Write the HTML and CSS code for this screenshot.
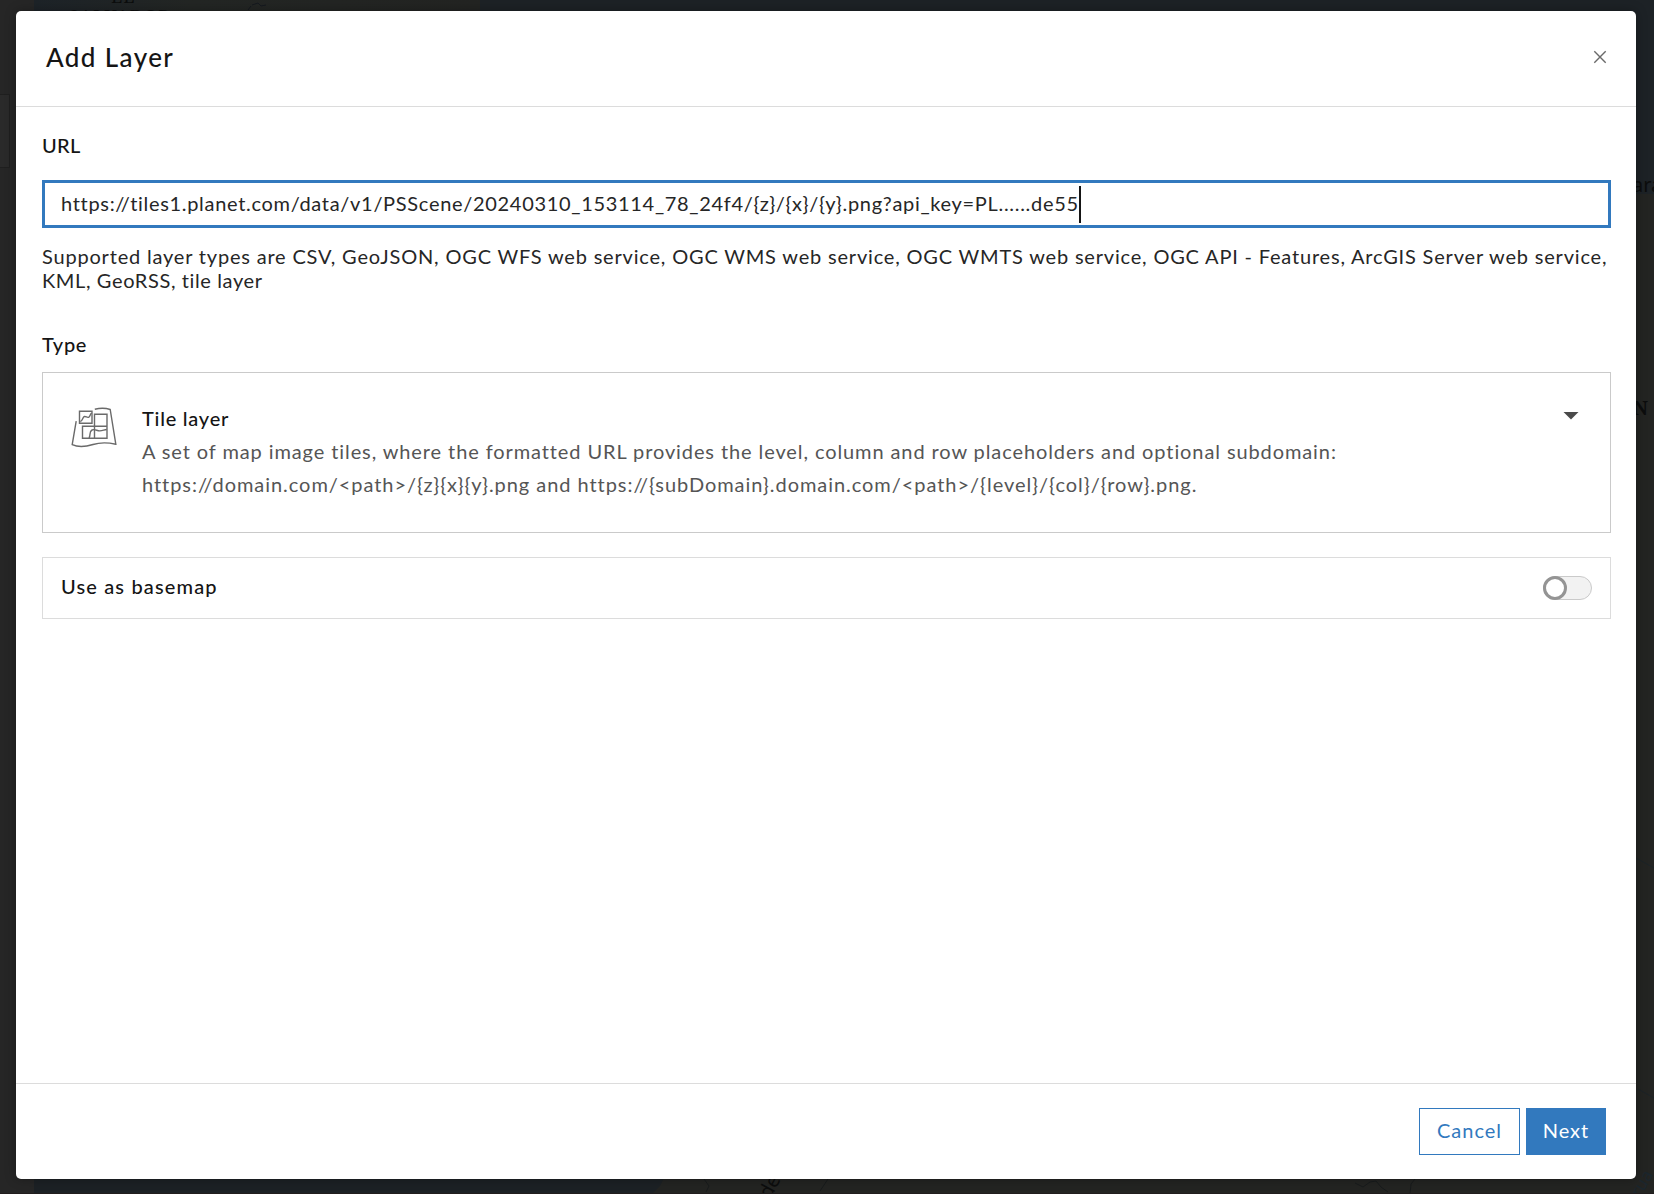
FILE: index.html
```html
<!DOCTYPE html>
<html lang="en">
<head>
  <meta charset="UTF-8" />
  <meta name="viewport" content="width=device-width, initial-scale=1.0" />
  <title>Add Layer</title>
  <link rel="stylesheet" href="styles.css">
</head>
<body>
  <svg class="map" viewBox="0 0 1654 1194" aria-hidden="true">
    <defs>
      <linearGradient id="land" x1="0" y1="0" x2="1" y2="0">
        <stop offset="0" stop-color="#1d2328"/>
        <stop offset="0.35" stop-color="#232624"/>
        <stop offset="1" stop-color="#232422"/>
      </linearGradient>
    </defs>
    <rect width="1654" height="1194" fill="#232422"/>
    <rect x="34" width="446" height="20" fill="url(#land)"/>
    <path d="M480 0H1654V194H480z" fill="#1d2226"/>
    <path d="M34 1170H668L660 1186L652 1194H34z" fill="#1c2125"/>
    <rect width="34" height="1194" fill="#262626"/>
    <path d="M-1 94.500H9.500V167.500H-1z" fill="#2a2a2a" stroke="#1f1f1f"/>
    <g fill="#0c0d0d">
      <text class="place" x="111" y="3" font-size="18" letter-spacing="1">EL</text>
      <text class="place" x="69" y="23" font-size="18" letter-spacing="1">SALVADOR</text>
      <text class="place" x="1633" y="415" font-size="19" font-weight="bold">N</text>
      <text class="town" x="1632" y="192" font-size="20">ara</text>
      <text class="town" x="0" y="0" font-size="20" transform="translate(770 1200) rotate(-62)">de</text>
    </g>
    <text class="town" font-size="17" fill="#1b262d" transform="translate(1640 1198) rotate(-60)">rua</text>
    <g fill="none" stroke="#181b1c">
      <path d="M1355 1183l8 4 7-5 6-1 5 6 7 5M1410 1194l1-10 4-5M704 1179l5 7-3 6M828 1179l-8 12"/>
      <path d="M252 5l6-2 3 3 5-1M248 10l3-4" stroke="#15191f"/>
      <path d="M1636 858l18 10M1638 1089l16 9" stroke="#1c2328"/>
    </g>
    <path d="M0 1193.500H1654" stroke="#211d1d"/>
  </svg>

  <div class="modal" role="dialog" aria-label="Add Layer">
    <div class="modal-header">
      <h1>Add Layer</h1>
      <button class="close" type="button" aria-label="Close">
        <svg width="14" height="14" viewBox="0 0 14 14"><path d="M1.300 1.300L12.700 12.700M12.700 1.300L1.300 12.700" fill="none" stroke="#6a6a6a" stroke-width="1.400"/></svg>
      </button>
    </div>

    <div class="modal-body">
      <div class="label url-label">URL</div>
      <div class="url-input"><span class="url-text">https://tiles1.planet.com/data/v1/PSScene/20240310_153114_78_24f4/{z}/{x}/{y}.png?api_key=PL......de55</span><span class="caret"></span></div>
      <p class="help"><span class="help-first">Supported layer types are CSV, GeoJSON, OGC WFS web service, OGC WMS web service, OGC WMTS web service, OGC API - Features, ArcGIS Server web service,</span><br><span class="help-second">KML, GeoRSS, tile layer</span></p>

      <div class="label type-label">Type</div>
      <div class="type-select">
        <svg class="type-icon" width="48" height="44" viewBox="0 0 48 44" fill="none" stroke="#6a6a6a" stroke-width="1.400">
          <path d="M6.200 15.200L2.200 38.700C8 41.300 15 41 23 38.500C31 36 38 36.500 45.800 38.200L40.200 3.500C35 1.800 30 2 24.800 3.200"/>
          <path d="M9.500 5.200H22V17.300H9.500zM24.500 8.200H37V20.200H24.500zM12.500 20.200H24.500V32.300H12.500zM24.500 20.200H37V32.300H24.500z"/>
          <path d="M10.300 15.500c2.500-.3 2.200-4.800 4.200-5 1.800-.2 2.300 1.300 4 .8 1.800-.6 1.200-3 3.200-4.300M19 32c2-3-.2-6.500 3-8 3-1.300 5 1 7.800.9 3-.1 4.500-1.300 7-1.400"/>
        </svg>
        <div class="type-text">
          <div class="type-name">Tile layer</div>
          <div class="type-desc"><span class="desc-first">A set of map image tiles, where the formatted URL provides the level, column and row placeholders and optional subdomain:</span><br><span class="desc-second">https://domain.com/&lt;path&gt;/{z}{x}{y}.png and https://{subDomain}.domain.com/&lt;path&gt;/{level}/{col}/{row}.png.</span></div>
        </div>
        <svg class="arrow" width="16" height="8" viewBox="0 0 16 8"><path d="M.5 0H15.500L8 7.600z" fill="#4a4a4a"/></svg>
      </div>

      <div class="basemap">
        <span class="basemap-name">Use as basemap</span>
        <span class="switch"><span class="handle"></span></span>
      </div>
    </div>

    <div class="modal-footer">
      <button class="btn cancel" type="button">Cancel</button>
      <button class="btn next" type="button">Next</button>
    </div>
  </div>
</body>
</html>
```
FILE: styles.css
```css
* {
  box-sizing: border-box;
}
body {
  margin: 0;
  height: 1194px;
  padding: 11px 18px 15px 16px;
  overflow: hidden;
  background: #232422;
  color: #151515;
  font-family: "Avenir Next", Lato, "Open Sans", sans-serif;
  font-size: 20px;
}
.map {
  position: absolute;
  top: 0;
  left: 0;
  width: 1654px;
  height: 1194px;
}
.place {
  font-family: "Noto Serif", "DejaVu Serif", serif;
}
.town {
  font-family: "Noto Sans", sans-serif;
}
.modal {
  position: relative;
  display: flex;
  flex-direction: column;
  height: 1168px;
  background: #fff;
  border-radius: 5px;
  box-shadow: 0 0 12px rgba(0, 0, 0, 0.3);
}
.modal-header {
  display: flex;
  justify-content: space-between;
  align-items: center;
  height: 96px;
  padding: 0 29px 4px 30px;
  border-bottom: 1px solid #dcdcdc;
}
h1 {
  margin: 0;
  font-size: 26px;
  font-weight: 500;
  line-height: 36px;
  letter-spacing: 1.4px;
}
.close {
  display: flex;
  padding: 0;
  border: none;
  background: none;
}
.modal-body {
  flex: 1;
  padding: 26px 25px 0 26px;
}
.label {
  height: 24px;
  font-weight: 500;
  line-height: 24px;
}
.url-label {
  letter-spacing: 0.3px;
}
.url-input {
  display: flex;
  align-items: center;
  height: 48px;
  margin-top: 23px;
  padding: 0 16px;
  border: 3px solid #3279be;
  color: #262626;
  white-space: nowrap;
}
.url-text {
  padding-bottom: 2px;
  letter-spacing: 0.69px;
}
.caret {
  width: 2px;
  height: 37px;
  background: #151515;
}
.help {
  height: 48px;
  margin: 16px 0 0;
  color: #262626;
  line-height: 24px;
  white-space: nowrap;
}
.help-first {
  letter-spacing: 0.81px;
}
.help-second {
  letter-spacing: 0.62px;
}
.type-label {
  margin-top: 40px;
  letter-spacing: 0.7px;
}
.type-select {
  display: flex;
  height: 161px;
  margin-top: 16px;
  padding: 29px 31px 0 27px;
  border: 1px solid #cacaca;
}
.type-icon {
  flex: none;
  margin-top: 4px;
}
.type-text {
  flex: 1;
  margin-left: 24px;
  line-height: 33px;
  white-space: nowrap;
}
.type-name {
  font-weight: 500;
  letter-spacing: 0.75px;
}
.type-desc {
  color: #555;
}
.desc-first {
  letter-spacing: 0.9px;
}
.desc-second {
  letter-spacing: 0.95px;
}
.arrow {
  flex: none;
  margin-top: 10px;
}
.basemap {
  display: flex;
  align-items: center;
  justify-content: space-between;
  height: 62px;
  margin-top: 24px;
  padding: 0 18px;
  border: 1px solid #dcdcdc;
  font-weight: 500;
}
.basemap-name {
  padding-bottom: 5px;
  letter-spacing: 1.15px;
}
.switch {
  width: 49px;
  height: 24px;
  border: 1px solid #cacaca;
  border-radius: 12px;
  background: #f2f2f2;
}
.handle {
  display: block;
  width: 24px;
  height: 24px;
  margin: -1px;
  border: 3px solid #949494;
  border-radius: 50%;
  background: #fff;
}
.modal-footer {
  display: flex;
  justify-content: flex-end;
  gap: 6px;
  height: 96px;
  padding: 24px 30px 0 0;
  border-top: 1px solid #dcdcdc;
}
.btn {
  height: 47px;
  padding: 0 0 3px;
  border: 1px solid #3279be;
  font-family: inherit;
  font-size: 20px;
  letter-spacing: 1px;
}
.cancel {
  width: 101px;
  background: #fff;
  color: #3279be;
}
.next {
  width: 80px;
  background: #3279be;
  color: #fff;
}
```
